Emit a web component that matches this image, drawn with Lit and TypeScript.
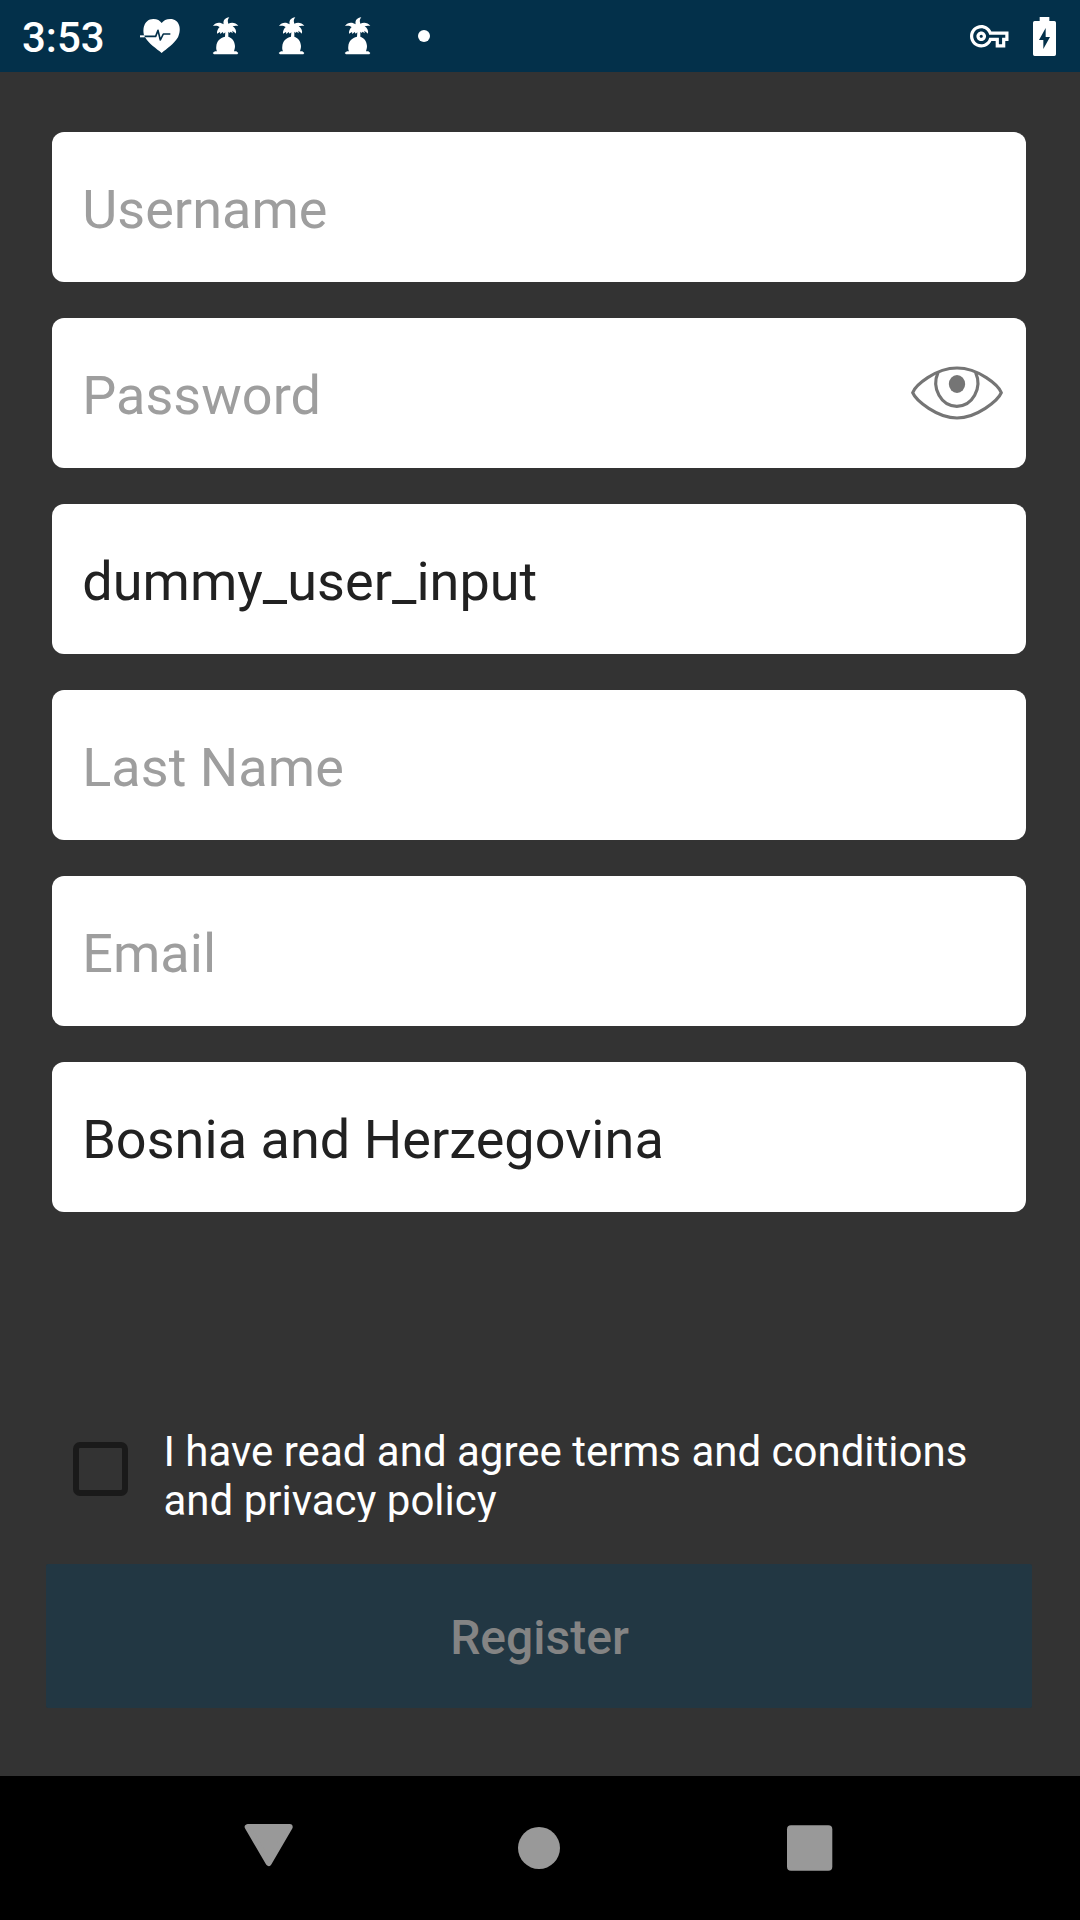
import { LitElement, html, css, svg, nothing } from "lit";
import { customElement, property } from "lit/decorators.js";

const heartIcon = html`<svg class="cell" viewBox="381 0 198 216">
  <path fill="#fff" d="M485 159C470 147 446 131 435 112C425 92 431 57 460 57C472 57 480 62 485 69C490 62 499 57 511 57C538 57 546 86 534 112C523 131 500 147 485 159Z"/>
  <path fill="none" stroke="#03304a" stroke-width="5" stroke-linejoin="round" d="M430 109H467L474 91L481 120L490 102H511"/>
  <path fill="#fff" d="M420 106H434V112H420Z"/>
</svg>`;

const palmIcon = html`<svg class="cell" viewBox="-21 0 198 216">
  <path fill="#fff" d="M88 52C81 60 84 66 85 71C94 66 108 67 115 78C108 76 103 77 98 79C105 83 110 91 108 101C104 97 101 95 97 92L98 100L92 95L89 99L86 95L85 98V110C95 113 104 122 105 138C105 145 103 150 102 154H109L115 159L112 163H42L38 159L45 154H51C49 150 48 145 49 138C50 123 60 114 75 110L76 97L71 101L68 96L61 102L60 96L51 101C50 93 54 86 59 81C52 76 46 77 39 78C47 66 61 66 71 73C68 62 75 53 88 52Z"/>
</svg>`;

const dotIcon = html`<svg class="cell" viewBox="0 0 66 72"><circle cx="33" cy="36" r="6" fill="#fff"/></svg>`;

const keyIcon = html`<svg class="key" viewBox="0 0 24 24">
  <path fill="#fff" d="M22 19h-6v-4h-2.68c-1.14 2.42-3.6 4-6.32 4-3.86 0-7-3.14-7-7s3.14-7 7-7c2.72 0 5.17 1.58 6.32 4H24v6h-2v4zm-4-2h2v-4h2v-2H11.94l-.23-.67C11.01 8.34 9.11 7 7 7c-2.76 0-5 2.24-5 5s2.24 5 5 5c2.11 0 4.01-1.34 4.71-3.33l.23-.67H18v4zM7 15c-1.65 0-3-1.35-3-3s1.35-3 3-3 3 1.35 3 3-1.35 3-3 3zm0-4c-.55 0-1 .45-1 1s.45 1 1 1 1-.45 1-1-.45-1-1-1z"/>
</svg>`;

const batteryIcon = html`<svg class="battery" viewBox="279 48 69 117">
  <path fill="#fff" fill-rule="evenodd" d="M299 48H328V60H343Q348 60 348 65V160Q348 165 343 165H284Q279 165 279 160V65Q279 60 284 60H299ZM317 81L297 117H310V144L330 108H317Z"/>
</svg>`;

const eyeIcon = html`<svg class="eye" viewBox="60 72 282 174">
  <g fill="none" stroke="#757575" stroke-width="9.5">
    <path stroke-linejoin="round" d="M68 158C76 136 136 84 201 84C266 84 326 136 334 158C324 182 260 234 201 234C142 234 78 182 68 158Z"/>
    <path d="M144 98A63 70 0 1 0 257 98"/>
  </g>
  <ellipse cx="201" cy="132" rx="24.5" ry="27" fill="#757575"/>
</svg>`;

@customElement("status-bar")
class StatusBar extends LitElement {
  static styles = css`
    :host { display: flex; align-items: center; height: 72px; background: #03304a; color: #fff; }
    .time { width: 127px; box-sizing: border-box; padding-left: 22px; font-size: 42px; font-weight: 500; line-height: 72px; padding-top: 3px; white-space: nowrap; }
    .cell { width: 66px; height: 72px; display: block; }
    .system { margin-left: auto; display: flex; align-items: center; gap: 24.5px; padding-right: 24px; }
    .key { width: 38.5px; height: 38.5px; display: block; padding-top: 1px; }
    .battery { width: 23px; height: 39px; display: block; }
  `;
  render() {
    return html`<div class="time">3:53</div>
      ${heartIcon}${palmIcon}${palmIcon}${palmIcon}${dotIcon}
      <div class="system">${keyIcon}${batteryIcon}</div>`;
  }
}

@customElement("form-field")
class FormField extends LitElement {
  @property() label = "";
  @property() value = "";
  @property({ type: Boolean }) secret = false;
  static styles = css`
    :host { display: flex; align-items: center; height: 150px; box-sizing: border-box; padding: 0 22px 0 30.2px; background: #fff; border-radius: 12px; }
    .input { flex: 1; min-width: 0; border: 0; outline: 0; margin: 0; padding: 6px 0 0; background: transparent; font: 400 54px/64px Roboto, sans-serif; letter-spacing: 0.04px; color: #212121; }
    .input::placeholder { color: #9e9e9e; opacity: 1; }
    .eye { width: 94px; height: 58px; display: block; }
  `;
  render() {
    return html`<input class="input" type=${this.secret ? "password" : "text"} placeholder=${this.label} .value=${this.value} spellcheck="false" />
      ${this.secret ? eyeIcon : nothing}`;
  }
}

@customElement("nav-bar")
class NavBar extends LitElement {
  static styles = css`
    :host { display: flex; justify-content: center; height: 144px; background: #000; }
    .button { width: 270px; height: 144px; display: block; }
  `;
  render() {
    const shapes = [
      svg`<path d="M112.7 51H154.7L133.7 87Z" stroke="#999" stroke-width="6" stroke-linejoin="round"/>`,
      svg`<circle cx="134" cy="72" r="21"/>`,
      svg`<rect x="112" y="49.3" width="45.3" height="45.4" rx="4"/>`,
    ];
    return html`${shapes.map((s) => html`<svg class="button" viewBox="0 0 270 144" fill="#999">${s}</svg>`)}`;
  }
}

@customElement("app-root")
class AppRoot extends LitElement {
  static styles = css`
    :host { display: flex; flex-direction: column; width: 1080px; height: 1920px; overflow: hidden; background: #333; font-family: Roboto, sans-serif; }
    .form { flex: 1; display: flex; flex-direction: column; padding: 60px 48px 68px 46px; }
    .fields { display: flex; flex-direction: column; gap: 36px; padding: 0 6px; }
    .consent { display: flex; align-items: center; gap: 35.5px; margin-top: auto; margin-bottom: 42px; padding-left: 27px; height: 99px; }
    .box { flex: none; width: 55px; height: 54px; box-sizing: border-box; border: 6px solid #1a1a1a; border-radius: 7px; margin-bottom: 7px; }
    .terms { height: 99px; box-sizing: border-box; padding-top: 4px; overflow: hidden; color: #fff; font-size: 42px; line-height: 49px; }
    .register { height: 144px; border: 0; border-radius: 2px; padding: 4px 0 0 1px; background: #223743; color: #848484; font: 500 48px/56px Roboto, sans-serif; }
  `;
  render() {
    return html`<status-bar></status-bar>
      <main class="form">
        <div class="fields">
          <form-field label="Username"></form-field>
          <form-field label="Password" secret></form-field>
          <form-field label="First Name" value="dummy_user_input"></form-field>
          <form-field label="Last Name"></form-field>
          <form-field label="Email"></form-field>
          <form-field label="Country" value="Bosnia and Herzegovina"></form-field>
        </div>
        <div class="consent">
          <div class="box"></div>
          <div class="terms">I have read and agree terms and conditions<br />and privacy policy</div>
        </div>
        <button class="register" disabled>Register</button>
      </main>
      <nav-bar></nav-bar>`;
  }
}
